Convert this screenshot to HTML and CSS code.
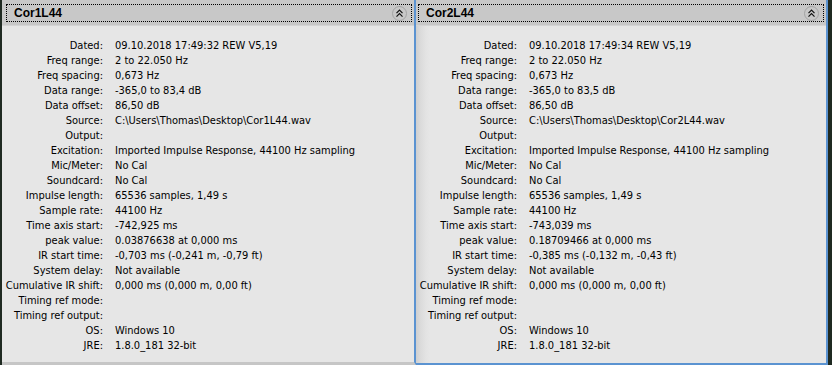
FILE: index.html
```html
<!DOCTYPE html>
<html>
<head>
<meta charset="utf-8">
<link rel="stylesheet" href="styles.css">
</head>
<body>
<div class="frame">
  <section class="panel panel-left">
    <div class="header">
      <div class="focus">
        <span class="title">Cor1L44</span>
        <span class="collapse"><svg width="15" height="15" viewBox="0 0 15 15"><circle cx="7.5" cy="7.5" r="7" fill="none" stroke="#a3a3a3"/><path d="M4.5 7.2 L7.5 4.2 L10.5 7.2 M4.5 10.6 L7.5 7.6 L10.5 10.6" fill="none" stroke="#111" stroke-width="1.2"/></svg></span>
      </div>
    </div>
    <div class="info">
      <span class="k">Dated:</span><span class="v">09.10.2018 17:49:32 REW V5,19</span>
      <span class="k">Freq range:</span><span class="v">2 to 22.050 Hz</span>
      <span class="k">Freq spacing:</span><span class="v">0,673 Hz</span>
      <span class="k">Data range:</span><span class="v">-365,0 to 83,4 dB</span>
      <span class="k">Data offset:</span><span class="v">86,50 dB</span>
      <span class="k">Source:</span><span class="v">C:\Users\Thomas\Desktop\Cor1L44.wav</span>
      <span class="k">Output:</span><span class="v"></span>
      <span class="k">Excitation:</span><span class="v">Imported Impulse Response, 44100 Hz sampling</span>
      <span class="k">Mic/Meter:</span><span class="v">No Cal</span>
      <span class="k">Soundcard:</span><span class="v">No Cal</span>
      <span class="k">Impulse length:</span><span class="v">65536 samples, 1,49 s</span>
      <span class="k">Sample rate:</span><span class="v">44100 Hz</span>
      <span class="k">Time axis start:</span><span class="v">-742,925 ms</span>
      <span class="k">peak value:</span><span class="v">0.03876638 at 0,000 ms</span>
      <span class="k">IR start time:</span><span class="v">-0,703 ms (-0,241 m, -0,79 ft)</span>
      <span class="k">System delay:</span><span class="v">Not available</span>
      <span class="k">Cumulative IR shift:</span><span class="v">0,000 ms (0,000 m, 0,00 ft)</span>
      <span class="k">Timing ref mode:</span><span class="v"></span>
      <span class="k">Timing ref output:</span><span class="v"></span>
      <span class="k">OS:</span><span class="v">Windows 10</span>
      <span class="k">JRE:</span><span class="v">1.8.0_181 32-bit</span>
    </div>
  </section>
  <section class="panel panel-right">
    <div class="header">
      <div class="focus">
        <span class="title">Cor2L44</span>
        <span class="collapse"><svg width="15" height="15" viewBox="0 0 15 15"><circle cx="7.5" cy="7.5" r="7" fill="none" stroke="#a3a3a3"/><path d="M4.5 7.2 L7.5 4.2 L10.5 7.2 M4.5 10.6 L7.5 7.6 L10.5 10.6" fill="none" stroke="#111" stroke-width="1.2"/></svg></span>
      </div>
    </div>
    <div class="info">
      <span class="k">Dated:</span><span class="v">09.10.2018 17:49:34 REW V5,19</span>
      <span class="k">Freq range:</span><span class="v">2 to 22.050 Hz</span>
      <span class="k">Freq spacing:</span><span class="v">0,673 Hz</span>
      <span class="k">Data range:</span><span class="v">-365,0 to 83,5 dB</span>
      <span class="k">Data offset:</span><span class="v">86,50 dB</span>
      <span class="k">Source:</span><span class="v">C:\Users\Thomas\Desktop\Cor2L44.wav</span>
      <span class="k">Output:</span><span class="v"></span>
      <span class="k">Excitation:</span><span class="v">Imported Impulse Response, 44100 Hz sampling</span>
      <span class="k">Mic/Meter:</span><span class="v">No Cal</span>
      <span class="k">Soundcard:</span><span class="v">No Cal</span>
      <span class="k">Impulse length:</span><span class="v">65536 samples, 1,49 s</span>
      <span class="k">Sample rate:</span><span class="v">44100 Hz</span>
      <span class="k">Time axis start:</span><span class="v">-743,039 ms</span>
      <span class="k">peak value:</span><span class="v">0.18709466 at 0,000 ms</span>
      <span class="k">IR start time:</span><span class="v">-0,385 ms (-0,132 m, -0,43 ft)</span>
      <span class="k">System delay:</span><span class="v">Not available</span>
      <span class="k">Cumulative IR shift:</span><span class="v">0,000 ms (0,000 m, 0,00 ft)</span>
      <span class="k">Timing ref mode:</span><span class="v"></span>
      <span class="k">Timing ref output:</span><span class="v"></span>
      <span class="k">OS:</span><span class="v">Windows 10</span>
      <span class="k">JRE:</span><span class="v">1.8.0_181 32-bit</span>
    </div>
  </section>
</div>
</body>
</html>
```
FILE: styles.css
```css
html, body {
  margin: 0;
  padding: 0;
  width: 832px;
  height: 365px;
  overflow: hidden;
  background: #1f2a22;
  font-family: "DejaVu Sans Condensed", "DejaVu Sans", sans-serif;
  font-stretch: condensed;
  font-size: 11px;
  color: #000;
}
.frame {
  display: flex;
  height: 365px;
  padding-left: 2px;
  padding-right: 4px;
  box-sizing: border-box;
}
.panel {
  display: flex;
  flex-direction: column;
  background: #e6e6e6;
  box-sizing: border-box;
}
.panel-left {
  width: 414px;
  height: 365px;
  border-right: 2px solid #5b93d1;
  border-bottom: 3px solid #c6c6c6;
}
.panel-right {
  flex: 1;
  height: 365px;
  border-right: 2px solid #5b93d1;
  border-bottom: 2px solid #5b93d1;
  background: linear-gradient(to right, #cfcfcf 0px, #dadada 4px, #e3e3e3 10px, #e6e6e6 14px);
}
.header {
  height: 26px;
  background: #c8c8c8;
  padding: 4px 2px 4px 4px;
  box-sizing: border-box;
  border-bottom: 1px solid #d4d4d4;
}
.panel-right .header {
  padding-left: 2px;
}
.focus {
  height: 18px;
  border: 1px dotted #000;
  box-sizing: border-box;
  display: flex;
  align-items: center;
  justify-content: space-between;
  padding: 0 4px 0 7px;
}
.title {
  font-family: "Liberation Sans", Arial, sans-serif;
  font-stretch: normal;
  font-weight: bold;
  font-size: 12px;
}
.collapse {
  display: flex;
}
.info {
  display: grid;
  grid-template-columns: 101px auto;
  column-gap: 12px;
  grid-auto-rows: 15px;
  line-height: 15px;
  padding-top: 12px;
  white-space: nowrap;
}
.k {
  text-align: right;
}
```
